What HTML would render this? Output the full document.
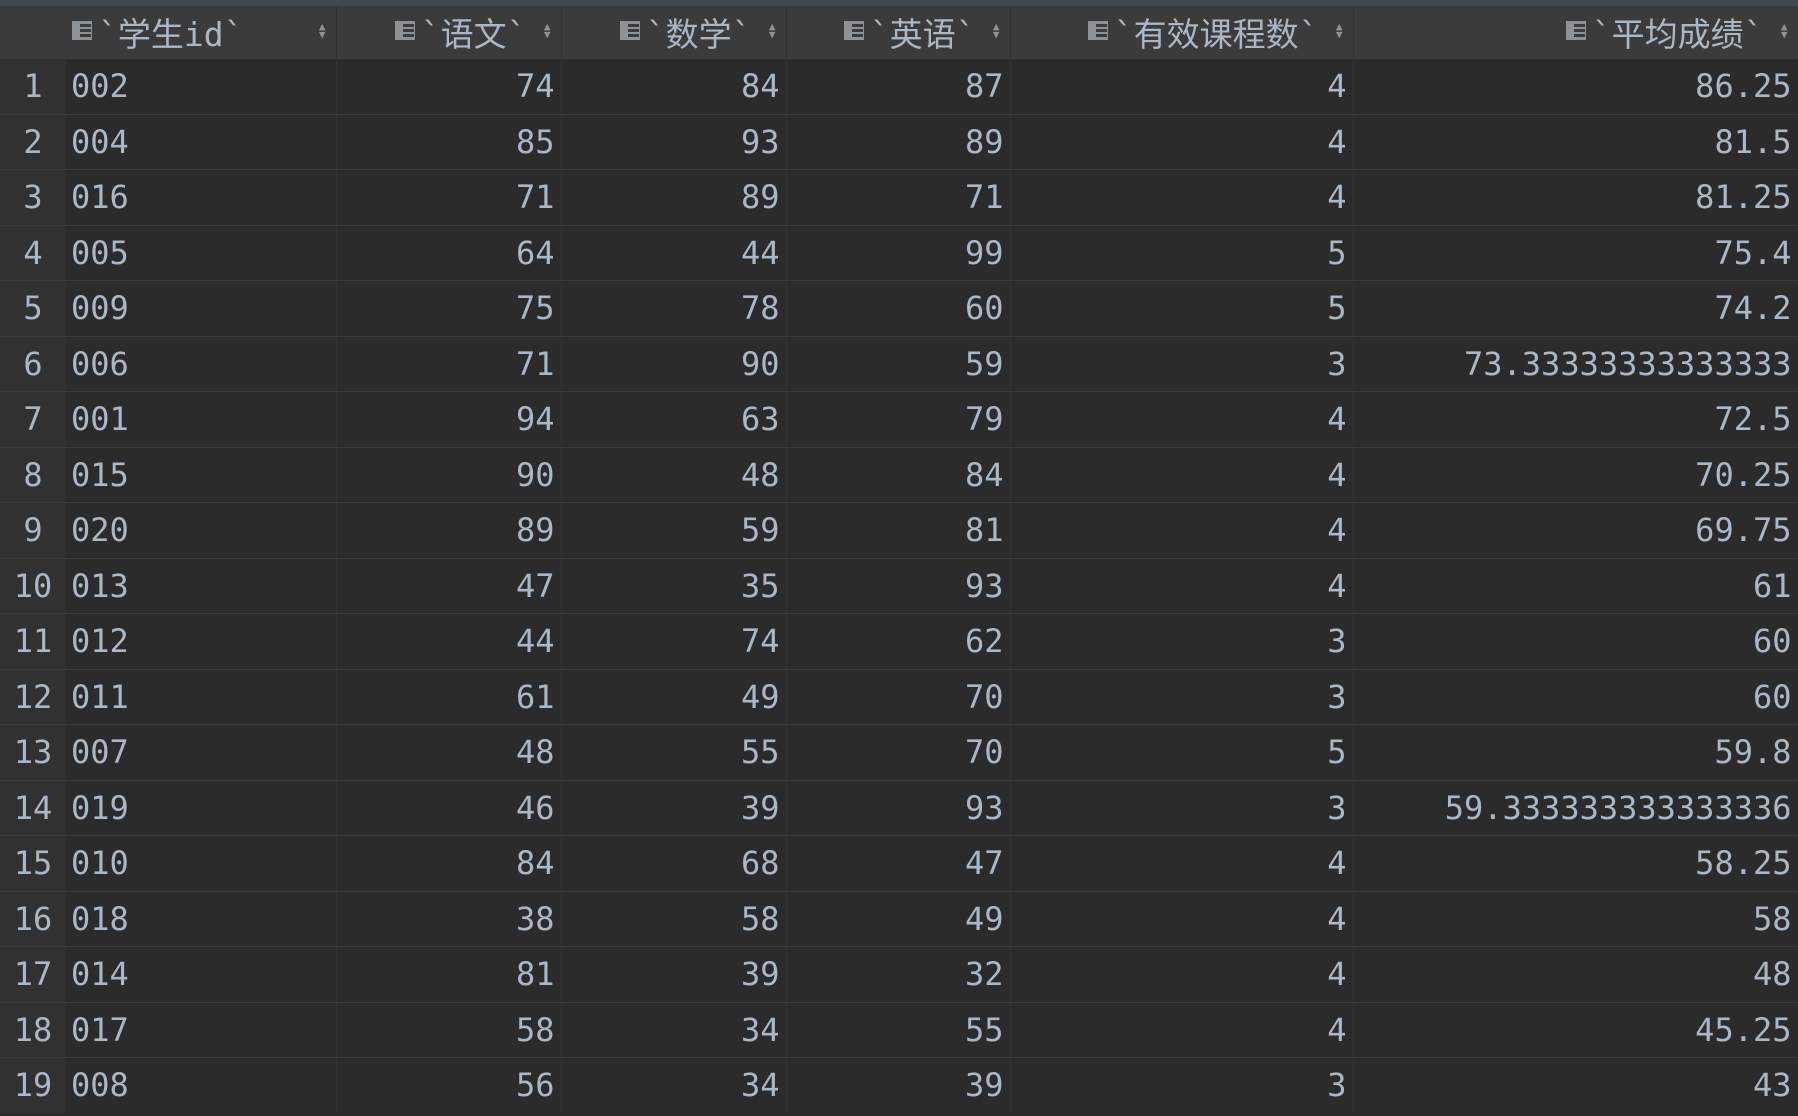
<!DOCTYPE html>
<html><head><meta charset="utf-8"><style>
html,body{margin:0;padding:0;background:#2b2b2b;width:1798px;height:1116px;overflow:hidden}
.top{height:6px;background:#45484a}
table{border-collapse:collapse;table-layout:fixed;width:1798px;font-family:"DejaVu Sans Mono","Liberation Mono","Noto Sans CJK SC",monospace;font-size:32px;color:#a9b7c6}
th{height:52px;background:#3b3b3b;font-weight:normal;border-right:1px solid #323232;padding:0;white-space:nowrap;position:relative;font-family:"DejaVu Sans Mono","Noto Sans CJK SC",monospace;font-size:33px}
td{height:54.5px;border-top:1.5px solid #3a3a3a;border-right:1px solid #333;padding:0 6px;text-align:right;white-space:nowrap;line-height:1}
td.n{background:#313131;padding:0;text-align:center;border-right:none}
td.l{text-align:left;padding-left:5px}
th.c0{background:#3b3b3b;border-right:none}
.ic{display:inline-block;width:20px;height:19px;vertical-align:middle;margin-right:6px;position:relative;top:-2px;background:linear-gradient(90deg,#8c9296 0 7px,transparent 7px),repeating-linear-gradient(0deg,#8c9296 0 2px,transparent 2px 5px);border:1px solid #8c9296;box-sizing:border-box}
.ar{position:absolute;right:10px;top:17px;font-size:11px;line-height:8px;color:#8c9296;text-align:center}
th .t{display:inline-block;vertical-align:middle}
th.r{text-align:right;padding-right:34px}
th.lft{text-align:left;padding-left:6px}
</style></head><body>
<div class="top"></div>
<table>
<colgroup><col style="width:66px"><col style="width:270px"><col style="width:225px"><col style="width:225px"><col style="width:224px"><col style="width:343px"><col style="width:445px"></colgroup>
<tr><th class="c0"></th>
<th class="lft"><span class="ic"></span><span class="t">`学生id`</span><span class="ar">▲<br>▼</span></th>
<th class="r"><span class="ic"></span><span class="t">`语文`</span><span class="ar">▲<br>▼</span></th>
<th class="r"><span class="ic"></span><span class="t">`数学`</span><span class="ar">▲<br>▼</span></th>
<th class="r"><span class="ic"></span><span class="t">`英语`</span><span class="ar">▲<br>▼</span></th>
<th class="r"><span class="ic"></span><span class="t">`有效课程数`</span><span class="ar">▲<br>▼</span></th>
<th class="r"><span class="ic"></span><span class="t">`平均成绩`</span><span class="ar">▲<br>▼</span></th></tr>
<tr><td class="n">1</td><td class="l">002</td><td>74</td><td>84</td><td>87</td><td>4</td><td>86.25</td></tr>
<tr><td class="n">2</td><td class="l">004</td><td>85</td><td>93</td><td>89</td><td>4</td><td>81.5</td></tr>
<tr><td class="n">3</td><td class="l">016</td><td>71</td><td>89</td><td>71</td><td>4</td><td>81.25</td></tr>
<tr><td class="n">4</td><td class="l">005</td><td>64</td><td>44</td><td>99</td><td>5</td><td>75.4</td></tr>
<tr><td class="n">5</td><td class="l">009</td><td>75</td><td>78</td><td>60</td><td>5</td><td>74.2</td></tr>
<tr><td class="n">6</td><td class="l">006</td><td>71</td><td>90</td><td>59</td><td>3</td><td>73.33333333333333</td></tr>
<tr><td class="n">7</td><td class="l">001</td><td>94</td><td>63</td><td>79</td><td>4</td><td>72.5</td></tr>
<tr><td class="n">8</td><td class="l">015</td><td>90</td><td>48</td><td>84</td><td>4</td><td>70.25</td></tr>
<tr><td class="n">9</td><td class="l">020</td><td>89</td><td>59</td><td>81</td><td>4</td><td>69.75</td></tr>
<tr><td class="n">10</td><td class="l">013</td><td>47</td><td>35</td><td>93</td><td>4</td><td>61</td></tr>
<tr><td class="n">11</td><td class="l">012</td><td>44</td><td>74</td><td>62</td><td>3</td><td>60</td></tr>
<tr><td class="n">12</td><td class="l">011</td><td>61</td><td>49</td><td>70</td><td>3</td><td>60</td></tr>
<tr><td class="n">13</td><td class="l">007</td><td>48</td><td>55</td><td>70</td><td>5</td><td>59.8</td></tr>
<tr><td class="n">14</td><td class="l">019</td><td>46</td><td>39</td><td>93</td><td>3</td><td>59.333333333333336</td></tr>
<tr><td class="n">15</td><td class="l">010</td><td>84</td><td>68</td><td>47</td><td>4</td><td>58.25</td></tr>
<tr><td class="n">16</td><td class="l">018</td><td>38</td><td>58</td><td>49</td><td>4</td><td>58</td></tr>
<tr><td class="n">17</td><td class="l">014</td><td>81</td><td>39</td><td>32</td><td>4</td><td>48</td></tr>
<tr><td class="n">18</td><td class="l">017</td><td>58</td><td>34</td><td>55</td><td>4</td><td>45.25</td></tr>
<tr><td class="n">19</td><td class="l">008</td><td>56</td><td>34</td><td>39</td><td>3</td><td>43</td></tr>
</table>
</body></html>
